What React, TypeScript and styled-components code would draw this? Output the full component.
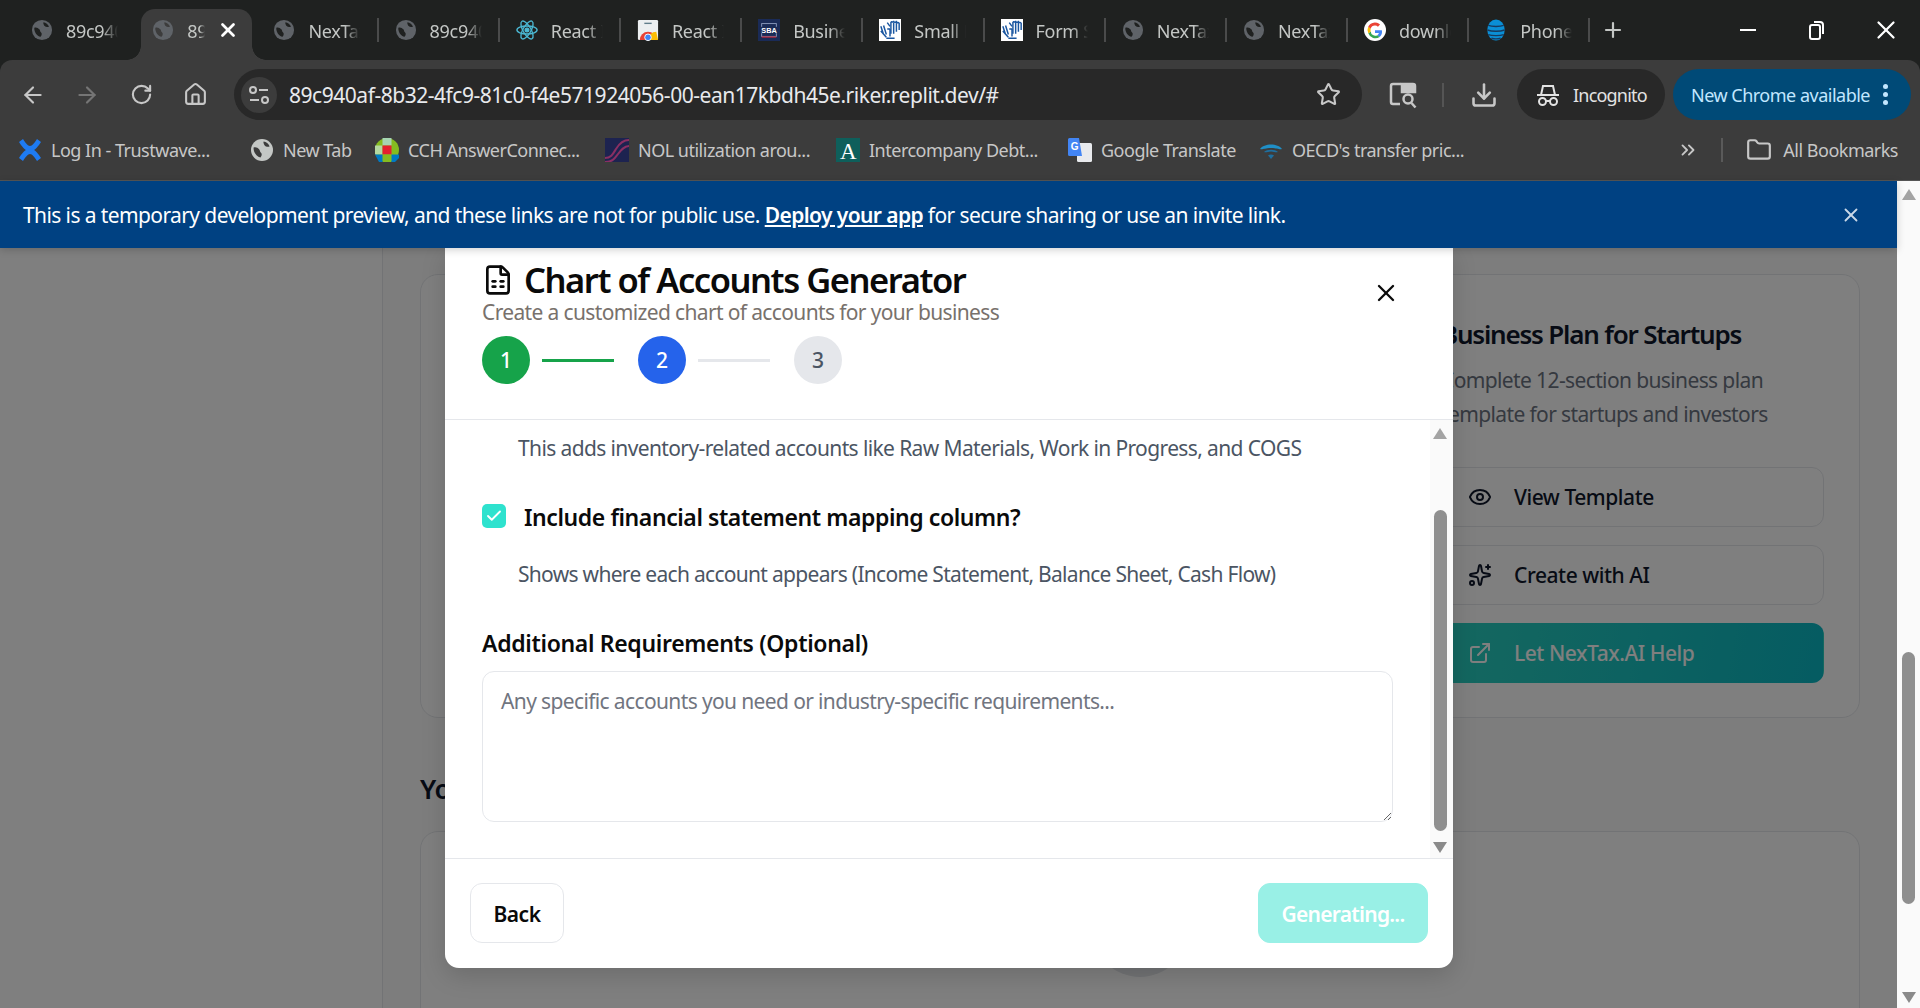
import type { ReactNode } from 'react';
import {
  ArrowLeft,
  ArrowRight,
  Check,
  ChevronsRight,
  Download,
  ExternalLink,
  Eye,
  FileSpreadsheet,
  Folder,
  House,
  Plus,
  RotateCw,
  Sparkles,
  Star,
  X,
} from 'lucide-react';
import styled, { createGlobalStyle } from 'styled-components';

const GlobalStyle = createGlobalStyle`
  * {
    box-sizing: border-box;
  }

  body {
    margin: 0;
    width: 1920px;
    height: 1008px;
    overflow: hidden;
    font-family: 'Noto Sans', 'Open Sans', sans-serif;
  }
`;

const Window = styled.div`
  display: flex;
  flex-direction: column;
  width: 1920px;
  height: 1008px;
  background-color: #1f2120;
  overflow: hidden;
`;

/* chrome: tabs */
const TabStrip = styled.div`
  display: flex;
  align-items: flex-start;
  height: 60px;
  padding: 9px 0 0 15px;
`;

const Tab = styled.div<{ $active?: boolean; $divider?: boolean }>`
  position: relative;
  display: flex;
  align-items: center;
  gap: 13px;
  flex: 0 0 121.2px;
  height: 51px;
  padding: 0 0 10px 16px;
  color: #c4c7c5;

  &::before {
    content: '';
    display: ${(props) => (props.$active ? 'block' : 'none')};
    position: absolute;
    inset: 0 5px;
    background-color: #3c3c3c;
    border-radius: 14px 14px 0 0;
  }

  &::after {
    content: '';
    display: ${(props) => (props.$divider ? 'block' : 'none')};
    position: absolute;
    right: 0;
    top: 9px;
    width: 2px;
    height: 24px;
    background-color: #4a4b4b;
  }

  > * {
    position: relative;
  }
`;

const TabFlare = styled.i<{ $side: 'left' | 'right' }>`
  && {
    position: absolute;
  }
  bottom: 0;
  ${(props) => (props.$side === 'left' ? 'left: -9px;' : 'right: -9px;')}
  width: 14px;
  height: 14px;
  background: radial-gradient(
    circle at ${(props) => (props.$side === 'left' ? '0 0' : '100% 0')},
    transparent 13.5px,
    #3c3c3c 14px
  );
`;

const TabTitle = styled.span<{ $width: number }>`
  width: ${(props) => props.$width}px;
  margin-top: 2px;
  font-size: 18px;
  line-height: 24px;
  white-space: nowrap;
  overflow: hidden;
  letter-spacing: -0.3px;
  -webkit-mask-image: linear-gradient(90deg, #000 70%, transparent);
  mask-image: linear-gradient(90deg, #000 70%, transparent);
`;

const TabClose = styled.span`
  && {
    position: absolute;
  }
  right: 18px;
  top: 10px;
  color: #fff;
  line-height: 0;
`;

const NewTab = styled.div`
  margin: 9px 0 0 10.5px;
  color: #c4c7c5;
  line-height: 0;
`;

const WindowControls = styled.div`
  display: flex;
  align-items: center;
  height: 42px;
  margin-left: auto;
`;

const WindowButton = styled.div`
  display: flex;
  align-items: center;
  justify-content: center;
  width: 69px;
  color: #fff;
`;

/* chrome: toolbar */
const Toolbar = styled.div`
  display: flex;
  align-items: center;
  height: 60px;
  padding: 9px 9px 0 0;
  background-color: #3c3c3c;
  border-radius: 12px 12px 0 0;
`;

const NavButton = styled.div<{ $dim?: boolean }>`
  display: flex;
  align-items: center;
  justify-content: center;
  flex: 0 0 54px;
  color: ${(props) => (props.$dim ? '#757575' : '#c7c7c7')};
`;

const NavGroup = styled.div`
  display: flex;
  padding-left: 6px;
  margin-right: 12px;
`;

const Omnibox = styled.div`
  display: flex;
  align-items: center;
  flex: 0 0 1128px;
  height: 51px;
  padding: 0 21px 0 7px;
  background-color: #282828;
  border-radius: 26px;
`;

const TuneBadge = styled.div`
  display: flex;
  align-items: center;
  justify-content: center;
  flex: 0 0 36px;
  height: 36px;
  margin-right: 12px;
  background-color: #3c3c3c;
  border-radius: 50%;
`;

const UrlText = styled.span`
  flex: 1;
  font-size: 21px;
  color: #e8eaed;
  letter-spacing: -0.47px;
  white-space: nowrap;
`;

const ToolbarIcon = styled.div<{ $left: number }>`
  display: flex;
  margin-left: ${(props) => props.$left}px;
  color: #c7c7c7;
`;

const ToolbarDivider = styled.div`
  width: 2px;
  height: 24px;
  margin-left: 25px;
  background-color: #555;
`;

const IncognitoPill = styled.div`
  display: flex;
  align-items: center;
  gap: 13px;
  width: 148px;
  height: 51px;
  margin-left: 19px;
  padding-left: 19px;
  background-color: #282828;
  border-radius: 26px;
  color: #e3e3e3;
  font-size: 18px;
  letter-spacing: -0.8px;
`;

const UpdatePill = styled.div`
  display: flex;
  align-items: center;
  width: 238px;
  height: 51px;
  margin-left: 8px;
  padding-left: 18px;
  background-color: #004a77;
  border-radius: 26px;
  color: #c2e7ff;
  font-size: 18px;
  letter-spacing: -0.5px;
  white-space: nowrap;
`;

const DotColumn = styled.span`
  display: flex;
  flex-direction: column;
  gap: 3px;
  margin-left: 13px;
`;

const Dot = styled.i`
  display: block;
  width: 5px;
  height: 5px;
  background-color: #c2e7ff;
  border-radius: 50%;
`;

/* chrome: bookmarks */
const BookmarksBar = styled.div`
  display: flex;
  align-items: center;
  height: 61px;
  padding: 0 0 1px 18px;
  background-color: #3c3c3c;
  border-bottom: 1px solid #555;
`;

const Bookmark = styled.div<{ $width: number }>`
  display: flex;
  align-items: center;
  gap: 9px;
  flex: 0 0 ${(props) => props.$width}px;
  font-size: 18px;
  letter-spacing: -0.5px;
  color: #c7c7c7;
  white-space: nowrap;
`;

const BookmarkEnd = styled.div`
  display: flex;
  align-items: center;
  gap: 11px;
  margin-left: auto;
  padding-right: 22px;
  color: #c7c7c7;
  font-size: 18px;
  letter-spacing: -0.5px;
`;

const BarDivider = styled.div`
  width: 2px;
  height: 24px;
  margin: 0 12px 0 11px;
  background-color: #5a5a5a;
`;

/* page area */
const Viewport = styled.div`
  display: flex;
  flex: 1;
  min-height: 0;
`;

const PageColumn = styled.div`
  display: flex;
  flex-direction: column;
  flex: 1;
  min-width: 0;
`;

const Banner = styled.div`
  position: relative;
  z-index: 3;
  display: flex;
  align-items: center;
  justify-content: space-between;
  flex: 0 0 67px;
  padding: 0 35px 0 23px;
  background-color: #004182;
  color: #fff;
  font-size: 21px;
  letter-spacing: -0.6px;
  white-space: nowrap;
  box-shadow: 0 2px 8px rgba(0, 0, 0, 0.18);

  a {
    color: #fff;
    font-weight: 600;
    text-decoration: underline;
  }
`;

const Page = styled.div`
  position: relative;
  display: flex;
  flex: 1;
  min-height: 0;
  overflow: hidden;
  background-color: #fbfbfb;
`;

const Sidebar = styled.div`
  flex: 0 0 383px;
  background-color: #fff;
  border-right: 1px solid #e5e7eb;
`;

const Main = styled.div`
  flex: 1;
  min-width: 0;
  padding: 26px 37px 0 37px;
`;

const CardGrid = styled.div`
  display: grid;
  grid-template-columns: repeat(3, 1fr);
  gap: 36px;
`;

const TemplateCard = styled.div`
  height: 444px;
  padding: 41px 35px 0 36px;
  background-color: #fff;
  border: 1px solid #e5e7eb;
  border-radius: 18px;
`;

const CardTitle = styled.h3`
  margin: 0;
  font-size: 26px;
  line-height: 36px;
  font-weight: 600;
  letter-spacing: -1.2px;
  color: #0f172a;
  white-space: nowrap;
`;

const CardText = styled.p`
  margin: 11px 0 36px;
  font-size: 21px;
  line-height: 34px;
  letter-spacing: -0.62px;
  color: #6b7280;
`;

const CardButton = styled.div<{ $primary?: boolean }>`
  display: flex;
  align-items: center;
  gap: 22px;
  height: 60px;
  margin-bottom: 18px;
  padding-left: 26px;
  border: 1px solid ${(props) => (props.$primary ? 'transparent' : '#e5e7eb')};
  border-radius: 12px;
  background: ${(props) =>
    props.$primary ? 'linear-gradient(100deg, #2ad0c0, #0ab8c4)' : '#fff'};
  color: ${(props) => (props.$primary ? '#fff' : '#0f172a')};
  font-size: 21px;
  font-weight: 500;
  letter-spacing: -0.45px;
`;

const SectionHeading = styled.h2`
  margin: 52px 0 23px;
  font-size: 27px;
  line-height: 38px;
  font-weight: 600;
  letter-spacing: -0.5px;
  color: #0f172a;
`;

const EmptyCard = styled.div`
  display: flex;
  justify-content: center;
  height: 300px;
  padding-top: 49px;
  background-color: #fff;
  border: 1px solid #e5e7eb;
  border-radius: 18px;
`;

const EmptyIcon = styled.div`
  width: 96px;
  height: 96px;
  background-color: #e5e7eb;
  border-radius: 50%;
`;

const Overlay = styled.div`
  position: absolute;
  inset: 0;
  z-index: 1;
  background-color: rgba(0, 0, 0, 0.5);
`;

/* scrollbars */
const ScrollTrack = styled.div<{ $inset?: number }>`
  display: flex;
  flex-direction: column;
  align-items: center;
  flex: 0 0 23px;
  padding-right: ${(props) => props.$inset ?? 0}px;
  background-color: #fafafa;
`;

const ArrowUp = styled.i`
  display: block;
  margin-top: 8px;
  border-left: 7px solid transparent;
  border-right: 7px solid transparent;
  border-bottom: 11px solid #a3a3a3;
`;

const ArrowDown = styled.i`
  display: block;
  margin-top: auto;
  margin-bottom: 5px;
  border-left: 7px solid transparent;
  border-right: 7px solid transparent;
  border-top: 11px solid #8a8a8a;
`;

const Thumb = styled.div<{ $offset: number; $height: number }>`
  width: 13px;
  height: ${(props) => props.$height}px;
  margin-top: ${(props) => props.$offset}px;
  background-color: #8f8f8f;
  border-radius: 7px;
`;

/* dialog */
const Dialog = styled.div`
  position: absolute;
  z-index: 2;
  top: 0;
  left: 445px;
  display: flex;
  flex-direction: column;
  width: 1008px;
  height: 720px;
  background-color: #fff;
  border-radius: 0 0 14px 14px;
  box-shadow: 0 8px 24px rgba(0, 0, 0, 0.15);
  overflow: hidden;
`;

const DialogHeader = styled.div`
  flex: 0 0 172px;
  padding: 12px 0 0 37px;
  border-bottom: 1px solid #e5e7eb;
`;

const TitleRow = styled.div`
  display: flex;
  align-items: center;
  gap: 10px;
  height: 40px;
`;

const DialogTitle = styled.h2`
  margin: 0;
  font-size: 34.5px;
  line-height: 40px;
  font-weight: 600;
  letter-spacing: -1.45px;
  color: #0a0a0a;
  white-space: nowrap;
`;

const DialogSubtitle = styled.p`
  margin: 0;
  font-size: 21px;
  line-height: 24px;
  letter-spacing: -0.64px;
  color: #78716c;
`;

const CloseButton = styled.div`
  position: absolute;
  top: 31px;
  left: 927px;
  line-height: 0;
  color: #0a0a0a;
`;

const Stepper = styled.div`
  display: flex;
  align-items: center;
  gap: 12px;
  margin-top: 12px;
`;

const StepDot = styled.div<{ $bg: string; $fg: string }>`
  display: flex;
  align-items: center;
  justify-content: center;
  width: 48px;
  height: 48px;
  background-color: ${(props) => props.$bg};
  color: ${(props) => props.$fg};
  border-radius: 50%;
  font-size: 21px;
  font-weight: 500;
`;

const StepLine = styled.div<{ $done?: boolean }>`
  width: 72px;
  height: 3px;
  margin-right: 12px;
  background-color: ${(props) => (props.$done ? '#16a34a' : '#e5e7eb')};
`;

const DialogBody = styled.div`
  display: flex;
  flex: 1;
  min-height: 0;
`;

const DialogScroll = styled.div`
  flex: 1;
  min-width: 0;
  padding: 13px 37px 0 37px;
`;

const HelpText = styled.p<{ $top: number; $spacing: number }>`
  margin: ${(props) => props.$top}px 0 0 36px;
  font-size: 21px;
  line-height: 30px;
  letter-spacing: ${(props) => props.$spacing}px;
  color: #4b5563;
  white-space: nowrap;
`;

const CheckRow = styled.div`
  display: flex;
  align-items: flex-start;
  gap: 18px;
  margin-top: 41px;
`;

const CheckBox = styled.div`
  display: flex;
  align-items: center;
  justify-content: center;
  flex: 0 0 24px;
  height: 24px;
  background-color: #2ee2ce;
  border-radius: 5px;
  color: #fff;
`;

const CheckLabel = styled.span`
  font-size: 23px;
  line-height: 26px;
  font-weight: 600;
  letter-spacing: -0.42px;
  color: #0a0a0a;
`;

const FieldLabel = styled.div`
  margin-top: 38px;
  font-size: 23px;
  line-height: 32px;
  font-weight: 600;
  letter-spacing: -0.33px;
  color: #0a0a0a;
`;

const Notes = styled.textarea`
  display: block;
  width: 100%;
  height: 151px;
  margin-top: 12px;
  padding: 14px 18px;
  border: 1px solid #e5e7eb;
  border-radius: 12px;
  outline: none;
  resize: vertical;
  font-family: inherit;
  font-size: 21px;
  line-height: 30px;
  letter-spacing: -0.63px;

  &::placeholder {
    color: #71757f;
    opacity: 1;
  }
`;

const DialogFooter = styled.div`
  display: flex;
  justify-content: space-between;
  flex: 0 0 110px;
  padding: 24px 25px 0;
  border-top: 1px solid #e5e7eb;
`;

const FooterButton = styled.div<{ $busy?: boolean }>`
  display: flex;
  align-items: center;
  justify-content: center;
  width: ${(props) => (props.$busy ? '170px' : '94px')};
  height: 60px;
  padding-top: 2px;
  background-color: ${(props) => (props.$busy ? '#99f0e6' : '#fff')};
  border: 1px solid ${(props) => (props.$busy ? '#99f0e6' : '#e5e7eb')};
  border-radius: 12px;
  color: ${(props) => (props.$busy ? '#fff' : '#0a0a0a')};
  font-size: 21px;
  font-weight: 600;
  letter-spacing: ${(props) => (props.$busy ? '-0.75px' : '-0.45px')};
`;

const FaviconBox = styled.span<{ $size: number }>`
  display: inline-flex;
  flex: 0 0 ${(props) => props.$size}px;
  width: ${(props) => props.$size}px;
  height: ${(props) => props.$size}px;
`;

type FaviconKind =
  | 'globe'
  | 'react'
  | 'store'
  | 'sba'
  | 'irs'
  | 'google'
  | 'att'
  | 'confluence'
  | 'cch'
  | 'nol'
  | 'serif'
  | 'translate'
  | 'oecd';

const Favicon = ({
  kind,
  size = 24,
  tone = '#5f6368',
  hole = '#1f2120',
}: {
  kind: FaviconKind;
  size?: number;
  tone?: string;
  hole?: string;
}) => {
  const art: Record<FaviconKind, ReactNode> = {
    globe: (
      <>
        <circle cx="12" cy="12" r="11" fill={tone} />
        <path
          fill={hole}
          d="M3.6 9.5c2.3-.8 4.2.3 5.5 1.8 1.1 1.2.6 2.6 1.9 3.5 1.2.8.8 3.4-.6 4.6-3.8-.6-7.2-5.3-6.8-9.9z"
        />
        <path
          fill={hole}
          d="M13.6 3.6c2.6.4 5 2.3 6 4.8-1.5.8-3.7.5-4.7-.7-.9-1.2-1.9-2.8-1.3-4.1z"
        />
      </>
    ),
    react: (
      <g fill="none" stroke="#4bb8d3" strokeWidth="1.5">
        <ellipse cx="12" cy="12" rx="11" ry="4.3" />
        <ellipse cx="12" cy="12" rx="11" ry="4.3" transform="rotate(60 12 12)" />
        <ellipse cx="12" cy="12" rx="11" ry="4.3" transform="rotate(120 12 12)" />
        <circle cx="12" cy="12" r="2" fill="#4bb8d3" />
      </g>
    ),
    store: (
      <>
        <rect x="1" y="1" width="22" height="22" rx="1.5" fill="#eceff1" />
        <rect x="8" y="4" width="8" height="1.5" fill="#607d8b" />
        <path d="M3 23a9 9 0 0 1 18 0z" fill="#ea4335" />
        <path d="M12 23a9 9 0 0 1 9-9l2 9z" fill="#fbbc04" />
        <circle cx="12" cy="20" r="3.6" fill="#4285f4" stroke="#fff" />
      </>
    ),
    sba: (
      <>
        <rect width="24" height="24" fill="#1a2b57" />
        <rect x="4" y="5" width="16" height="14" fill="none" stroke="#8d9cc0" />
        <rect x="2" y="8.5" width="20" height="7" fill="#1a2b57" />
        <text
          x="12"
          y="15"
          fontSize="8"
          fontWeight="700"
          fill="#fff"
          textAnchor="middle"
          fontFamily="Liberation Sans, sans-serif"
        >
          SBA
        </text>
        <rect x="4" y="19" width="16" height="1.4" fill="#b3263a" />
      </>
    ),
    irs: (
      <>
        <rect width="24" height="24" fill="#fff" />
        <g stroke="#1a56a0" strokeWidth="1.6" fill="none">
          <path d="M2 8l3 9M5 7l3 10M2 13l6 7M8 21h9" />
          <path d="M13 3v13M16 2v14M19 2v12M22 4v8M13 3l9 1" />
          <path d="M9 4l3 4M12 11v8M9 11h3" />
        </g>
      </>
    ),
    google: (
      <>
        <circle cx="12" cy="12" r="12" fill="#fff" />
        <path d="M19.5 12.2H12v3h4.3a4.6 4.6 0 0 1-1.8 2.4l2.6 2a8 8 0 0 0 2.4-7.4z" fill="#4285f4" />
        <path d="M7.4 13.5l-2.7 2A8.2 8.2 0 0 0 17.1 19.6l-2.6-2a4.8 4.8 0 0 1-7.1-4.1z" fill="#34a853" />
        <path d="M7.3 10.5l-2.7-2a8.2 8.2 0 0 0 .1 7l2.7-2a4.8 4.8 0 0 1-.1-3z" fill="#fbbc05" />
        <path d="M12 7.2a4.5 4.5 0 0 1 3.2 1.2l2.3-2.3A8.1 8.1 0 0 0 4.6 8.5l2.7 2A4.8 4.8 0 0 1 12 7.2z" fill="#ea4335" />
      </>
    ),
    att: (
      <>
        <ellipse cx="12" cy="12" rx="9.5" ry="11.5" fill="#0a8fd6" />
        <path
          d="M3.5 7c4 1.600 13 1.600 17 0M2.600 12c5 1.800 13.800 1.800 18.800 0M3.500 17c4 1.600 13 1.600 17 0M7 21c3 .8 7 .8 10 0"
          stroke="#173a5e"
          strokeWidth="1.5"
          fill="none"
        />
      </>
    ),
    confluence: (
      <path
        d="M1 4l4-3c2 3.500 5 7 7 7s5-3.500 7-7l4 3c-2.500 4-6 8-7 8 1 0 4.500 4 7 8l-4 3c-2-3.500-5-7-7-7s-5 3.500-7 7l-4-3c2.500-4 6-8 7-8-1 0-4.500-4-7-8z"
        fill="#1e7bf2"
      />
    ),
    cch: (
      <>
        <circle cx="12" cy="12" r="12" fill="#85bc20" />
        <path d="M7.5 0h9v7.5h-9z" fill="#a6d5b2" />
        <path d="M0 7.5h7.5v9H0z" fill="#b5d9a0" />
        <path d="M7.5 7.5h9v9h-9z" fill="#e5202e" />
        <path d="M7.5 16.5h9V24h-9z" fill="#85bc20" />
        <path d="M16.5 16.5H24V20l-4 4h-3.5z" fill="#007ac3" />
        <path d="M0 16.5h7.5V24H4z" fill="#007ac3" />
      </>
    ),
    nol: (
      <>
        <rect width="24" height="24" fill="#1d2350" />
        <path
          d="M0 20c6 0 8-4 11-9s7-9 13-9M0 24c8 0 10-4 13-8s6-8 11-8"
          stroke="#8a2f63"
          strokeWidth="2"
          fill="none"
        />
      </>
    ),
    serif: (
      <>
        <rect width="24" height="24" fill="#0e5f5b" />
        <text
          x="12"
          y="21"
          fontSize="23"
          fill="#fff"
          textAnchor="middle"
          fontFamily="Liberation Serif, serif"
        >
          A
        </text>
      </>
    ),
    translate: (
      <>
        <rect x="9" y="5" width="15" height="19" rx="1.5" fill="#e8eaed" />
        <path d="M1.5 0H11l3 18H1.5A1.5 1.5 0 0 1 0 16.5v-15A1.5 1.5 0 0 1 1.5 0z" fill="#4285f4" />
        <text
          x="6.5"
          y="12"
          fontSize="10"
          fontWeight="700"
          fill="#fff"
          textAnchor="middle"
          fontFamily="Liberation Sans, sans-serif"
        >
          G
        </text>
      </>
    ),
    oecd: (
      <>
        <path d="M1 11C5 5 19 5 23 11c-3 1-4-1-11-1S4 12 1 11z" fill="#1f8fc7" />
        <path d="M5 14c3-3 11-3 14 0-2 1-4-.5-7-.5S7 15 5 14z" fill="#1f6f9f" />
        <path d="M9 17.5c1.5-1.5 4.5-1.5 6 0l-3 3.5z" fill="#1f6f9f" />
      </>
    ),
  };

  return (
    <FaviconBox $size={size}>
      <svg width={size} height={size} viewBox="0 0 24 24">
        {art[kind]}
      </svg>
    </FaviconBox>
  );
};

const TuneIcon = () => (
  <svg width="24" height="24" viewBox="0 0 24 24" fill="none" stroke="#c7c7c7" strokeWidth="2">
    <circle cx="6" cy="7" r="3" />
    <path d="M12 7h9M3 17h9" />
    <circle cx="18" cy="17" r="3" />
  </svg>
);

const LensIcon = () => (
  <svg width="28" height="28" viewBox="0 0 28 28" fill="none" stroke="#c7c7c7" strokeWidth="2.5">
    <path d="M11 23H4a2 2 0 0 1-2-2V5a2 2 0 0 1 2-2h8" />
    <path d="M13 3h11a2 2 0 0 1 2 2v6H13z" fill="#c7c7c7" />
    <circle cx="19" cy="18" r="4.5" />
    <path d="M22.5 22l4 4.5" />
  </svg>
);

const IncognitoIcon = () => (
  <svg width="24" height="24" viewBox="0 0 24 24" fill="none" stroke="#e3e3e3" strokeWidth="2">
    <path d="M1 12h22M5 12l2-9h10l2 9" />
    <circle cx="6.5" cy="18.5" r="3.5" />
    <circle cx="17.5" cy="18.5" r="3.5" />
    <path d="M10 18h4" />
  </svg>
);

const RestoreIcon = () => (
  <svg width="18" height="20" viewBox="0 0 18 20" fill="none" stroke="#fff" strokeWidth="2">
    <rect x="2" y="5" width="10" height="14" rx="2" />
    <path d="M6 2h6a3 3 0 0 1 3 3v9" />
  </svg>
);

const MinimizeIcon = () => (
  <svg width="16" height="4" viewBox="0 0 16 4">
    <rect width="16" height="2" y="1" fill="#fff" />
  </svg>
);

const tabs: { kind: FaviconKind; title: string; width: number }[] = [
  { kind: 'globe', title: '89c940af', width: 52 },
  { kind: 'globe', title: '89c940af', width: 18 },
  { kind: 'globe', title: 'NexTax.AI', width: 52 },
  { kind: 'globe', title: '89c940af', width: 52 },
  { kind: 'react', title: 'React Icons', width: 52 },
  { kind: 'store', title: 'React Icons', width: 52 },
  { kind: 'sba', title: 'Business', width: 52 },
  { kind: 'irs', title: 'Small Business', width: 52 },
  { kind: 'irs', title: 'Form SS-4', width: 52 },
  { kind: 'globe', title: 'NexTax.AI', width: 52 },
  { kind: 'globe', title: 'NexTax.AI', width: 52 },
  { kind: 'google', title: 'download', width: 52 },
  { kind: 'att', title: 'Phone', width: 52 },
];

const bookmarks: { kind: FaviconKind; title: string; width: number }[] = [
  { kind: 'confluence', title: 'Log In - Trustwave...', width: 232 },
  { kind: 'globe', title: 'New Tab', width: 125 },
  { kind: 'cch', title: 'CCH AnswerConnec...', width: 230 },
  { kind: 'nol', title: 'NOL utilization arou...', width: 231 },
  { kind: 'serif', title: 'Intercompany Debt...', width: 232 },
  { kind: 'translate', title: 'Google Translate', width: 191 },
  { kind: 'oecd', title: "OECD's transfer pric...", width: 230 },
];

const App = () => {
  return (
    <Window>
      <GlobalStyle />
      <TabStrip>
        {tabs.map((tab, i) => (
          <Tab key={`tab${i}`} $active={i === 1} $divider={i > 1}>
            {i === 1 && <TabFlare $side="left" />}
            {i === 1 && <TabFlare $side="right" />}
            <Favicon kind={tab.kind} size={22} hole={i === 1 ? '#3c3c3c' : '#1f2120'} />
            <TabTitle $width={tab.width}>{tab.title}</TabTitle>
            {i === 1 && (
              <TabClose>
                <X size={22} strokeWidth={3} />
              </TabClose>
            )}
          </Tab>
        ))}
        <NewTab>
          <Plus size={24} strokeWidth={2.2} />
        </NewTab>
        <WindowControls>
          <WindowButton>
            <MinimizeIcon />
          </WindowButton>
          <WindowButton>
            <RestoreIcon />
          </WindowButton>
          <WindowButton>
            <X size={30} strokeWidth={1.8} />
          </WindowButton>
        </WindowControls>
      </TabStrip>

      <Toolbar>
        <NavGroup>
          <NavButton>
            <ArrowLeft size={26} strokeWidth={2} />
          </NavButton>
          <NavButton $dim>
            <ArrowRight size={26} strokeWidth={2} />
          </NavButton>
          <NavButton>
            <RotateCw size={23} strokeWidth={2.2} />
          </NavButton>
          <NavButton>
            <House size={25} strokeWidth={2} />
          </NavButton>
        </NavGroup>
        <Omnibox>
          <TuneBadge>
            <TuneIcon />
          </TuneBadge>
          <UrlText>89c940af-8b32-4fc9-81c0-f4e571924056-00-ean17kbdh45e.riker.replit.dev/#</UrlText>
          <Star size={25} color="#c7c7c7" strokeWidth={2} />
        </Omnibox>
        <ToolbarIcon $left={27}>
          <LensIcon />
        </ToolbarIcon>
        <ToolbarDivider />
        <ToolbarIcon $left={26}>
          <Download size={28} strokeWidth={2.2} />
        </ToolbarIcon>
        <IncognitoPill>
          <IncognitoIcon />
          Incognito
        </IncognitoPill>
        <UpdatePill>
          New Chrome available
          <DotColumn>
            <Dot />
            <Dot />
            <Dot />
          </DotColumn>
        </UpdatePill>
      </Toolbar>

      <BookmarksBar>
        {bookmarks.map((item, i) => (
          <Bookmark key={`bookmark${i}`} $width={item.width}>
            <Favicon kind={item.kind} tone="#c4c7c5" hole="#3c3c3c" />
            {item.title}
          </Bookmark>
        ))}
        <BookmarkEnd>
          <ChevronsRight size={22} strokeWidth={2} />
          <BarDivider />
          <Folder size={26} strokeWidth={2} />
          All Bookmarks
        </BookmarkEnd>
      </BookmarksBar>

      <Viewport>
        <PageColumn>
          <Banner>
            <span>
              This is a temporary development preview, and these links are not for public use.{' '}
              <a href="#deploy">Deploy your app</a> for secure sharing or use an invite link.
            </span>
            <X size={22} strokeWidth={2} color="#c9d8e8" />
          </Banner>
          <Page>
            <Sidebar />
            <Main>
              <CardGrid>
                <TemplateCard />
                <TemplateCard />
                <TemplateCard>
                  <CardTitle>Business Plan for Startups</CardTitle>
                  <CardText>Complete 12-section business plan template for startups and investors</CardText>
                  <CardButton>
                    <Eye size={24} />
                    View Template
                  </CardButton>
                  <CardButton>
                    <Sparkles size={24} />
                    Create with AI
                  </CardButton>
                  <CardButton $primary>
                    <ExternalLink size={24} />
                    Let NexTax.AI Help
                  </CardButton>
                </TemplateCard>
              </CardGrid>
              <SectionHeading>Your Documents</SectionHeading>
              <EmptyCard>
                <EmptyIcon />
              </EmptyCard>
            </Main>
            <Overlay />
            <Dialog>
              <DialogHeader>
                <TitleRow>
                  <FileSpreadsheet size={32} strokeWidth={2} color="#0a0a0a" />
                  <DialogTitle>Chart of Accounts Generator</DialogTitle>
                </TitleRow>
                <DialogSubtitle>Create a customized chart of accounts for your business</DialogSubtitle>
                <Stepper>
                  <StepDot $bg="#16a34a" $fg="#fff">1</StepDot>
                  <StepLine $done />
                  <StepDot $bg="#2563eb" $fg="#fff">2</StepDot>
                  <StepLine />
                  <StepDot $bg="#e5e7eb" $fg="#4b5563">3</StepDot>
                </Stepper>
              </DialogHeader>
              <CloseButton>
                <X size={28} strokeWidth={2} />
              </CloseButton>
              <DialogBody>
                <DialogScroll>
                  <HelpText $top={0} $spacing={-0.62}>
                    This adds inventory-related accounts like Raw Materials, Work in Progress, and COGS
                  </HelpText>
                  <CheckRow>
                    <CheckBox>
                      <Check size={18} strokeWidth={2.5} />
                    </CheckBox>
                    <CheckLabel>Include financial statement mapping column?</CheckLabel>
                  </CheckRow>
                  <HelpText $top={29} $spacing={-0.7}>
                    Shows where each account appears (Income Statement, Balance Sheet, Cash Flow)
                  </HelpText>
                  <FieldLabel>Additional Requirements (Optional)</FieldLabel>
                  <Notes placeholder="Any specific accounts you need or industry-specific requirements..." />
                </DialogScroll>
                <ScrollTrack $inset={3}>
                  <ArrowUp />
                  <Thumb $offset={71} $height={321} />
                  <ArrowDown />
                </ScrollTrack>
              </DialogBody>
              <DialogFooter>
                <FooterButton>Back</FooterButton>
                <FooterButton $busy>Generating...</FooterButton>
              </DialogFooter>
            </Dialog>
          </Page>
        </PageColumn>
        <ScrollTrack>
          <ArrowUp />
          <Thumb $offset={452} $height={252} />
          <ArrowDown />
        </ScrollTrack>
      </Viewport>
    </Window>
  );
};

export default App;
